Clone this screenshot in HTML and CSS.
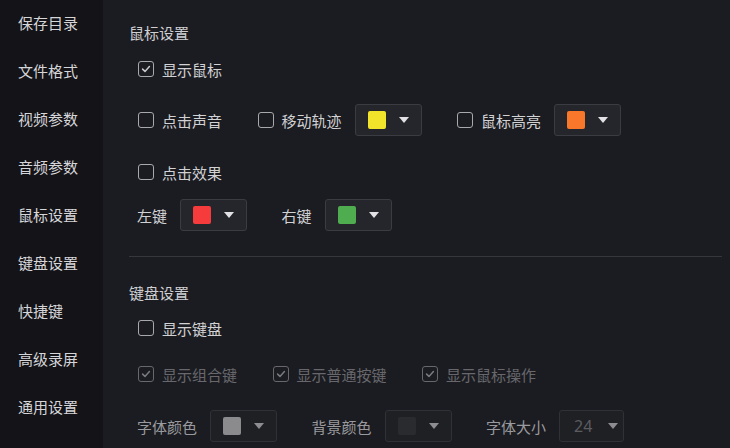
FILE: index.html
```html
<!DOCTYPE html>
<html lang="zh-CN">
<head>
<meta charset="utf-8">
<title>设置</title>
<link rel="stylesheet" href="styles.css">
</head>
<body>
<div class="app">
  <nav class="sidebar">
    <div class="nav-item">保存目录</div>
    <div class="nav-item">文件格式</div>
    <div class="nav-item">视频参数</div>
    <div class="nav-item">音频参数</div>
    <div class="nav-item">鼠标设置</div>
    <div class="nav-item">键盘设置</div>
    <div class="nav-item">快捷键</div>
    <div class="nav-item">高级录屏</div>
    <div class="nav-item">通用设置</div>
  </nav>
  <main class="content">
    <div class="heading h-mouse">鼠标设置</div>
    <div class="row r1">
      <label class="check"><span class="box checked"><svg viewBox="0 0 12 12"><path d="M2.6 6.1 L5 8.4 L9.4 3.6"/></svg></span><span class="lbl">显示鼠标</span></label>
    </div>
    <div class="row r2">
      <label class="check"><span class="box"></span><span class="lbl">点击声音</span></label>
      <label class="check"><span class="box"></span><span class="lbl">移动轨迹</span></label>
      <div class="select"><span class="swatch yellow"></span><span class="arrow"></span></div>
      <label class="check"><span class="box"></span><span class="lbl">鼠标高亮</span></label>
      <div class="select"><span class="swatch orange"></span><span class="arrow"></span></div>
    </div>
    <div class="row r3">
      <label class="check"><span class="box"></span><span class="lbl">点击效果</span></label>
    </div>
    <div class="row r4">
      <span class="field-label">左键</span>
      <div class="select"><span class="swatch red"></span><span class="arrow"></span></div>
      <span class="field-label">右键</span>
      <div class="select"><span class="swatch green"></span><span class="arrow"></span></div>
    </div>
    <div class="divider"></div>
    <div class="heading h-kbd">键盘设置</div>
    <div class="row r6">
      <label class="check"><span class="box"></span><span class="lbl">显示键盘</span></label>
    </div>
    <div class="row r7 disabled">
      <label class="check"><span class="box checked"><svg viewBox="0 0 12 12"><path d="M2.6 6.1 L5 8.4 L9.4 3.6"/></svg></span><span class="lbl">显示组合键</span></label>
      <label class="check"><span class="box checked"><svg viewBox="0 0 12 12"><path d="M2.6 6.1 L5 8.4 L9.4 3.6"/></svg></span><span class="lbl">显示普通按键</span></label>
      <label class="check"><span class="box checked"><svg viewBox="0 0 12 12"><path d="M2.6 6.1 L5 8.4 L9.4 3.6"/></svg></span><span class="lbl">显示鼠标操作</span></label>
    </div>
    <div class="row r8 disabled">
      <span class="field-label">字体颜色</span>
      <div class="select"><span class="swatch gray"></span><span class="arrow"></span></div>
      <span class="field-label">背景颜色</span>
      <div class="select"><span class="swatch dark"></span><span class="arrow"></span></div>
      <span class="field-label">字体大小</span>
      <div class="select size"><span class="num">24</span><span class="arrow"></span></div>
    </div>
  </main>
</div>
</body>
</html>
```
FILE: styles.css
```css
* { box-sizing: border-box; }
html, body {
  margin: 0;
  padding: 0;
  width: 730px;
  height: 448px;
  overflow: hidden;
  background: #1b1c21;
  font-family: "Noto Sans CJK SC", "Noto Sans", sans-serif;
  font-size: 15px;
  color: #d2d2d4;
}
.app {
  display: flex;
  height: 448px;
}
.sidebar {
  width: 103px;
  flex: none;
  background: #131318;
  margin-top: -1px;
}
.nav-item {
  height: 48px;
  line-height: 48px;
  padding-left: 18px;
  font-size: 15px;
  color: #d6d6d8;
  white-space: nowrap;
}
.content {
  flex: 1;
  padding: 23px 8px 0 26px;
  display: flex;
  flex-direction: column;
}
.heading {
  height: 20px;
  line-height: 20px;
  font-size: 15px;
  color: #cfcfd2;
}
.h-kbd { margin-top: 26px; }
.row {
  display: flex;
  align-items: center;
  height: 32px;
  padding-left: 8px;
  flex: none;
}
.r1 { margin-top: 10px; }
.r2 { margin-top: 19px; }
.r3 { margin-top: 20px; }
.r4 { margin-top: 11px; }
.r6 { margin-top: 9px; }
.r7 { margin-top: 14px; }
.r8 { margin-top: 20px; }
.divider {
  height: 1px;
  flex: none;
  background: #36373c;
  margin-top: 25px;
}
.check {
  display: flex;
  align-items: center;
  margin-right: 34.5px;
  flex: none;
}
.box {
  flex: none;
  width: 16px;
  height: 16px;
  border: 1.5px solid #a9a9ad;
  border-radius: 3px;
  margin-left: 1px;
  margin-right: 8px;
  display: flex;
  align-items: center;
  justify-content: center;
}
.box svg {
  width: 12px;
  height: 12px;
  fill: none;
  stroke: #c9c9cc;
  stroke-width: 1.5;
  stroke-linecap: round;
  stroke-linejoin: round;
}
.lbl {
  color: #d2d2d4;
  white-space: nowrap;
}
.field-label {
  white-space: nowrap;
  margin-right: 13px;
  color: #d2d2d4;
}
.select {
  width: 67px;
  height: 32px;
  border: 1px solid #3b3c41;
  border-radius: 3px;
  background: #25262b;
  display: flex;
  align-items: center;
  padding-left: 12px;
  margin-right: 34.5px;
  flex: none;
}
.r2 .check + .select { margin-left: -21.5px; }
.swatch {
  flex: none;
  width: 18px;
  height: 18px;
  border-radius: 2px;
  margin-right: 13px;
}
.yellow { background: #f1e42b; }
.orange { background: #f8772a; }
.red { background: #f53b3b; }
.green { background: #4fac4f; }
.gray { background: #8b8b8d; }
.dark { background: #2a2b2f; }
.arrow {
  flex: none;
  width: 0;
  height: 0;
  border-left: 5.5px solid transparent;
  border-right: 5.5px solid transparent;
  border-top: 6px solid #e2e2e4;
}
.disabled .box { border-color: #68686c; }
.disabled .box svg { stroke: #7a7a7e; }
.disabled .lbl { color: #68686c; }
.disabled .field-label { color: #9a9a9e; }
.disabled .select {
  background: #1f2024;
  border-color: #303136;
}
.disabled .arrow { border-top-color: #8e8e92; }
.select.size {
  width: 65px;
  padding-left: 14px;
}
.num {
  color: #5c5c60;
  font-family: "Noto Sans", "Liberation Sans", sans-serif;
  font-size: 16px;
  margin-right: 15px;
  width: 19px;
}
```
